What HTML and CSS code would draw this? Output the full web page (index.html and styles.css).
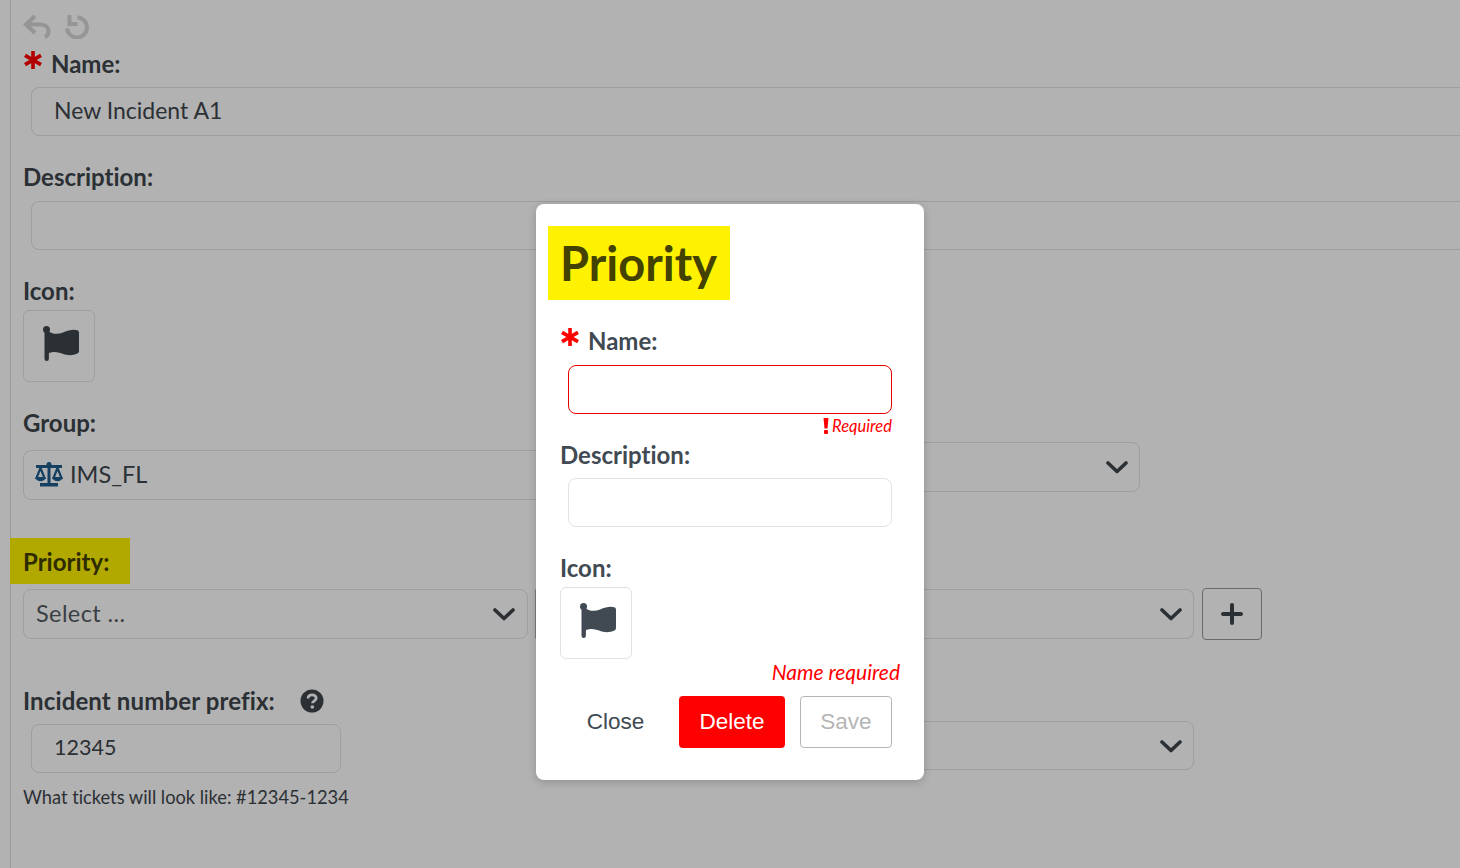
FILE: index.html
```html
<html>
    <head>
        <title>Incident type</title>
        <link rel="stylesheet" href="styles.css">
    </head>
    <body>
        <svg class="icon-defs" width="0" height="0">
            <symbol id="flag" viewBox="0 0 36 36">
                <circle cx="3.5" cy="3.5" r="3.5"/>
                <rect x="1.5" y="3" width="4.4" height="32" rx="2.2"/>
                <path d="M5 5 C10 8.500 15 8.500 20 6.500 C26 4 31 3 35 4.500 Q36 5 36 7 V25 Q36 26.500 34.500 27.500 C29 30 24 29.500 19 27.500 C14 25.500 9 25.500 5 27.500 Z"/>
            </symbol>
            <symbol id="chevron" viewBox="0 0 22 14">
                <path d="M2 3 L11 11.5 L20 3" fill="none" stroke="currentColor" stroke-width="3.6" stroke-linecap="round" stroke-linejoin="round"/>
            </symbol>
            <symbol id="asterisk" viewBox="0 0 20 20">
                <path d="M10 1 V19 M2 5.4 L18 14.6 M18 5.4 L2 14.6" fill="none" stroke="currentColor" stroke-width="3.6"/>
            </symbol>
        </svg>

        <div class="page">
            <div class="history">
                <svg class="history-icon" width="28" height="25" viewBox="0 0 28 25">
                    <path d="M12 2 L3 10.5 L12 19 M3 10.5 H18 C23 10.5 25.500 14 25.500 17 C25.500 20 24 22 22 23" fill="none" stroke="currentColor" stroke-width="4.200"/>
                </svg>
                <svg class="history-icon" width="26" height="25" viewBox="0 0 26 25">
                    <path d="M13.500 3.500 A10 10 0 1 1 3 14.500 M5.500 1 V10 H13.500" fill="none" stroke="currentColor" stroke-width="4"/>
                </svg>
            </div>

            <div class="label label-name">
                <svg class="asterisk" width="20" height="20"><use href="#asterisk"/></svg>
                Name:
            </div>
            <div class="input input-wide">New Incident A1</div>

            <div class="label label-spaced">Description:</div>
            <div class="input input-wide input-desc"></div>

            <div class="label label-spaced">Icon:</div>
            <div class="icon-box">
                <svg class="flag-icon" width="36" height="36"><use href="#flag"/></svg>
            </div>

            <div class="label label-spaced">Group:</div>
            <div class="group-row">
                <div class="select select-group">
                    <svg class="scale-icon" width="28" height="26" viewBox="0 0 28 26">
                        <path d="M1 3 H27 V6 H15.500 V21 H23 V24.500 H5 V21 H12.500 V6 H1 Z"/>
                        <circle cx="14" cy="2.500" r="2.500"/>
                        <path d="M5.500 6 L1.500 16 H9.500 Z M22.500 6 L18.500 16 H26.500 Z" fill="none" stroke="currentColor" stroke-width="2.200"/>
                        <path d="M0.500 15.500 H10.500 C10 20.500 1 20.500 0.500 15.500 Z M17.500 15.500 H27.500 C27 20.500 18 20.500 17.500 15.500 Z"/>
                    </svg>
                    <span class="select-value">IMS_FL</span>
                </div>
                <div class="select select-group-right">
                    <svg class="chevron" width="22" height="14"><use href="#chevron"/></svg>
                </div>
            </div>

            <div class="label label-highlight">Priority:</div>
            <div class="priority-row">
                <div class="select select-priority">
                    <span class="select-value select-muted">Select ...</span>
                    <svg class="chevron" width="22" height="14"><use href="#chevron"/></svg>
                </div>
                <div class="select select-priority-right">
                    <svg class="chevron" width="22" height="14"><use href="#chevron"/></svg>
                </div>
                <div class="add-btn">
                    <svg width="22" height="22" viewBox="0 0 22 22">
                        <path d="M11 2 V20 M2 11 H20" fill="none" stroke="currentColor" stroke-width="4" stroke-linecap="round"/>
                    </svg>
                </div>
            </div>

            <div class="prefix-row">
                <div class="prefix-col">
                    <div class="label label-prefix">
                        Incident number prefix:
                        <svg class="help-icon" width="24" height="24" viewBox="0 0 24 24">
                            <circle cx="12" cy="12" r="11.500"/>
                            <path d="M8 9.500 C8 7 10 5.800 12.200 5.800 C14.500 5.800 16.200 7.200 16.200 9.200 C16.200 12 12.500 11.800 12.500 14.300" fill="none" stroke="#fff" stroke-width="2.800"/>
                            <circle cx="12.300" cy="18" r="1.800" fill="#fff"/>
                        </svg>
                    </div>
                    <div class="input input-prefix">12345</div>
                    <div class="hint">What tickets will look like: #12345-1234</div>
                </div>
                <div class="select select-prefix-right">
                    <svg class="chevron" width="22" height="14"><use href="#chevron"/></svg>
                </div>
            </div>
        </div>

        <div class="overlay"></div>

        <div class="modal">
            <h1 class="modal-title">Priority</h1>
            <div class="label modal-label-name">
                <svg class="asterisk asterisk-modal" width="20" height="20"><use href="#asterisk"/></svg>
                Name:
            </div>
            <div class="input modal-input modal-input-error"></div>
            <div class="required">
                <svg class="required-mark" width="6" height="16" viewBox="0 0 6 16">
                    <path d="M0.500 0 H5.500 L4.500 10.500 H1.500 Z"/>
                    <rect x="1" y="12" width="4" height="4" rx="1"/>
                </svg>
                Required
            </div>
            <div class="label modal-label-desc">Description:</div>
            <div class="input modal-input modal-input-desc"></div>
            <div class="label modal-label-icon">Icon:</div>
            <div class="icon-box icon-box-modal">
                <svg class="flag-icon" width="36" height="36"><use href="#flag"/></svg>
            </div>
            <div class="form-error">Name required</div>
            <div class="modal-actions">
                <button class="btn btn-close">Close</button>
                <button class="btn btn-delete">Delete</button>
                <button class="btn btn-save">Save</button>
            </div>
        </div>
    </body>
</html>
```

FILE: styles.css
```css
html, body {
    margin: 0;
    height: 868px;
    overflow: hidden;
    background-color: #fff;
}
body {
    font-family: Lato, "Open Sans", sans-serif;
    font-variant-ligatures: none;
    color: #3e464d;
}
.icon-defs {
    position: absolute;
}
.page {
    box-sizing: border-box;
    width: 1500px;
    height: 868px;
    margin-left: 10px;
    padding: 14px 0 0 12px;
    border-left: 1px solid #dcdcdc;
}
.history {
    display: flex;
    gap: 13px;
    height: 25px;
}
.history-icon {
    color: #d6d6d6;
}
.label {
    font-size: 24px;
    font-weight: 700;
    line-height: 26px;
    color: #3e464d;
}
.label-name {
    display: flex;
    align-items: center;
    gap: 8px;
    margin-top: 12px;
}
.asterisk {
    color: #f00;
    margin-top: -8px;
}
.label-spaced {
    margin-top: 28px;
}
.input {
    box-sizing: border-box;
    height: 49px;
    padding: 0 22px;
    border: 1px solid #e2e2e2;
    border-radius: 8px;
    font-size: 23px;
    line-height: 45px;
    color: #3e464d;
}
.input-wide {
    width: 1480px;
    margin: 10px 0 0 8px;
}
.input-desc {
    margin-top: 11px;
}
.icon-box {
    box-sizing: border-box;
    display: flex;
    width: 72px;
    height: 72px;
    margin-top: 6px;
    padding: 15px 0 0 19px;
    border: 1px solid #e2e2e2;
    border-radius: 6px;
    fill: #3e464d;
}
.group-row {
    display: flex;
    gap: 7px;
    margin-top: 6px;
}
.select {
    box-sizing: border-box;
    display: flex;
    align-items: center;
    justify-content: flex-end;
    height: 50px;
    padding: 0 11px;
    border: 1px solid #e2e2e2;
    border-radius: 8px;
    font-size: 23.500px;
    line-height: 46px;
    color: #3e464d;
}
.select-value {
    flex: 1;
    margin-top: -2px;
}
.select-muted {
    margin-left: 1px;
    letter-spacing: 0.4px;
    color: #545b62;
}
.select-group {
    width: 540px;
    margin-top: 8px;
}
.select-group-right {
    width: 570px;
}
.scale-icon {
    margin-right: 7px;
    color: #1f5c8b;
    fill: #1f5c8b;
}
.label-highlight {
    align-self: flex-start;
    width: 85px;
    margin: 38px 0 0 -13px;
    padding: 11px 22px 9px 13px;
    background-color: #fff200;
    color: #424000;
}
.priority-row {
    display: flex;
    align-items: center;
    gap: 7px;
    margin-top: 4px;
}
.select-priority {
    width: 505px;
    padding-right: 12px;
}
.select-priority-right {
    width: 659px;
    margin-right: 1px;
    border-left-color: #b4b4b4;
    border-radius: 0 8px 8px 0;
}
.add-btn {
    box-sizing: border-box;
    display: flex;
    align-items: center;
    justify-content: center;
    width: 60px;
    height: 52px;
    border: 1px solid #999;
    border-radius: 4px;
    color: #3e464d;
}
.prefix-row {
    display: flex;
    gap: 7px;
    margin-top: 48px;
}
.prefix-col {
    width: 505px;
}
.label-prefix {
    display: flex;
    align-items: center;
    gap: 25px;
    letter-spacing: 0.130px;
}
.help-icon {
    fill: #3e464d;
}
.input-prefix {
    width: 310px;
    margin: 10px 0 0 8px;
    font-size: 21.500px;
}
.hint {
    margin-top: 12px;
    font-size: 18.250px;
    line-height: 24px;
    color: #3e464d;
}
.select-prefix-right {
    width: 634px;
    height: 49px;
    margin: 33px 0 0 25px;
}
.overlay {
    position: absolute;
    top: 0;
    left: 0;
    width: 1460px;
    height: 868px;
    background-color: rgba(0, 0, 0, 0.3);
}
.modal {
    position: absolute;
    top: 204px;
    left: 536px;
    box-sizing: border-box;
    width: 388px;
    height: 576px;
    padding: 22px 32px 0 12px;
    background-color: #fff;
    border-radius: 8px;
    box-shadow: 0 2px 8px rgba(0, 0, 0, 0.2);
}
.modal-title {
    display: inline-block;
    margin: 0;
    padding: 0 13px 0 12px;
    height: 74px;
    background-color: #fff200;
    font-size: 47px;
    font-weight: 700;
    line-height: 74px;
    color: #434200;
}
.modal-label-name {
    display: flex;
    align-items: center;
    gap: 8px;
    margin: 28px 0 0 12px;
    color: #414a52;
}
.modal-input {
    width: 324px;
    margin: 11px 0 0 20px;
}
.modal-input-error {
    border-color: #e60000;
}
.modal-input-desc {
    margin-top: 10px;
}
.required {
    display: flex;
    align-items: center;
    justify-content: flex-end;
    gap: 3px;
    height: 24px;
    font-size: 16.500px;
    font-style: italic;
    line-height: 22px;
    color: #f00;
}
.required-mark {
    fill: #f00;
}
.modal-label-desc {
    margin: 4px 0 0 12px;
    color: #414a52;
}
.modal-label-icon {
    margin: 28px 0 0 12px;
    color: #414a52;
}
.icon-box-modal {
    margin: 6px 0 0 12px;
    fill: #414a52;
}
.form-error {
    width: 352px;
    font-size: 21px;
    font-style: italic;
    line-height: 26px;
    color: #f00;
    text-align: right;
}
.modal-actions {
    display: flex;
    justify-content: flex-end;
    gap: 15px;
    margin-top: 11px;
}
.btn {
    box-sizing: border-box;
    height: 52px;
    padding: 0;
    border: 1px solid transparent;
    border-radius: 4px;
    background: none;
    font-family: "Liberation Sans", Arial, sans-serif;
    font-size: 22.500px;
}
.btn-close {
    width: 106px;
    padding-left: 9px;
    color: #414a52;
}
.btn-delete {
    width: 106px;
    background-color: #f00;
    color: #fff;
}
.btn-save {
    width: 92px;
    border-color: #b5b5b5;
    color: #b5b5b5;
}
```
